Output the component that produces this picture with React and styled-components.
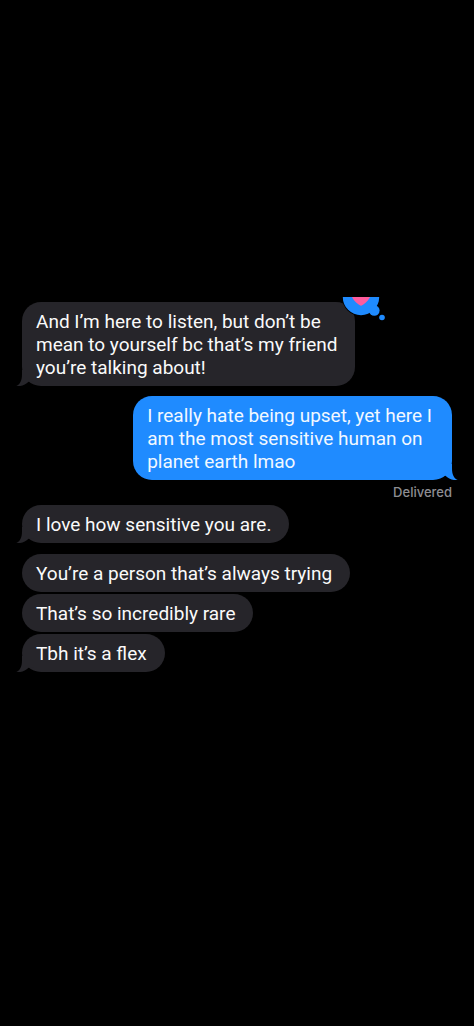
import React from "react";
import styled, { createGlobalStyle, css } from "styled-components";

const messages = [
  {
    id: 1,
    from: "them",
    tail: true,
    gap: 0,
    loved: true,
    text: "And I’m here to listen, but don’t be\nmean to yourself bc that’s my friend\nyou’re talking about!",
  },
  {
    id: 2,
    from: "me",
    tail: true,
    gap: 10,
    status: "Delivered",
    text: "I really hate being upset, yet here I\nam the most sensitive human on\nplanet earth lmao",
  },
  { id: 3, from: "them", tail: true, gap: 5, text: "I love how sensitive you are." },
  { id: 4, from: "them", gap: 11, text: "You’re a person that’s always trying" },
  { id: 5, from: "them", gap: 2, text: "That’s so incredibly rare" },
  { id: 6, from: "them", tail: true, gap: 2, text: "Tbh it’s a flex" },
];

function Tail({ side }) {
  return (
    <TailSvg $side={side} viewBox="0 0 20 16" aria-hidden="true">
      <path d="M6 0V4C6 10 4.500 14 0.300 16C5.500 16.500 9.500 15 12.500 11.800L18 12V0Z" />
    </TailSvg>
  );
}

function HeartReaction() {
  return (
    <Reaction viewBox="0 0 46 26" role="img" aria-label="Loved">
      <circle fill="#000" cx="20" cy="0" r="19" />
      <g fill="#1f8bff">
        <circle cx="20" cy="0" r="18.200" />
        <circle cx="33.300" cy="13.500" r="5.300" />
        <circle cx="41" cy="20.500" r="2.800" />
      </g>
      <path fill="#ff5c9d" d="M11 0C13 4 17 7.500 20 8.800C23 7.500 27 4 29 0Z" />
    </Reaction>
  );
}

export default function App() {
  return (
    <>
      <GlobalStyle />
      <Screen>
        <Thread>
          {messages.map((m) => (
            <MessageRow key={m.id} $from={m.from} $gap={m.gap}>
              <Bubble $from={m.from}>
                {m.text}
                {m.tail && <Tail side={m.from} />}
                {m.loved && <HeartReaction />}
              </Bubble>
              {m.status && <Status>{m.status}</Status>}
            </MessageRow>
          ))}
        </Thread>
      </Screen>
    </>
  );
}

const GlobalStyle = createGlobalStyle`
  * {
    box-sizing: border-box;
  }

  body {
    margin: 0;
    background: #000;
    font-family: Roboto, "Liberation Sans", sans-serif;
  }
`;

const Screen = styled.main`
  min-height: 100vh;
  padding: 302px 22px 24px;
  background: #000;
`;

const Thread = styled.ol`
  display: flex;
  flex-direction: column;
  margin: 0;
  padding: 0;
  list-style: none;
`;

const MessageRow = styled.li`
  display: flex;
  flex-direction: column;
  align-items: ${({ $from }) => ($from === "me" ? "flex-end" : "flex-start")};
  margin-top: ${({ $gap }) => $gap}px;
`;

const Bubble = styled.div`
  position: relative;
  padding: 8px ${({ $from }) => ($from === "me" ? 20 : 18)}px 7px 14px;
  border-radius: 19px;
  background: ${({ $from }) => ($from === "me" ? "#1f8bff" : "#26252a")};
  color: ${({ $from }) => ($from === "me" ? "#f2f8ff" : "#fafafa")};
  fill: ${({ $from }) => ($from === "me" ? "#1f8bff" : "#26252a")};
  font-size: 19px;
  line-height: 23px;
  white-space: pre-line;
`;

const TailSvg = styled.svg`
  position: absolute;
  bottom: 0;
  width: 20px;
  height: 16px;
  ${({ $side }) =>
    $side === "me"
      ? css`
          right: -6px;
          transform: scaleX(-1);
        `
      : css`
          left: -6px;
        `}
`;

const Reaction = styled.svg`
  position: absolute;
  top: -5px;
  right: -32px;
  width: 46px;
  height: 26px;
`;

const Status = styled.span`
  margin-top: 5px;
  color: #8e8e93;
  font-family: Inter, "Liberation Sans", sans-serif;
  font-size: 13px;
  font-weight: 500;
  line-height: 15px;
`;
